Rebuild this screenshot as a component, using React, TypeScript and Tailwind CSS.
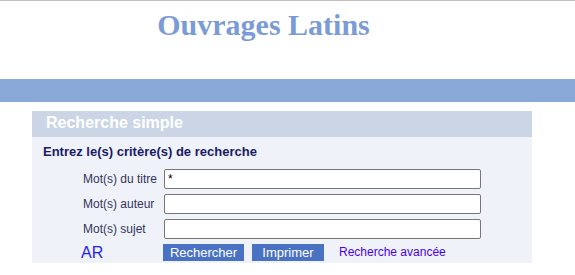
const FIELDS = [
  { label: 'Mot(s) du titre', value: '*' },
  { label: 'Mot(s) auteur', value: '' },
  { label: 'Mot(s) sujet', value: '' },
]

const App = () => {
  return (
    <div className="w-[575px] min-h-[275px] bg-white font-['Liberation_Sans',Arial,sans-serif]">
      {/* Title */}
      <header className="h-[79px] border-t border-[#c9bdbd] pt-[9px] pr-[48px]">
        <h1 className="text-center font-['Liberation_Serif',serif] text-[30px] font-bold leading-[30px] text-[#7b9bd6]">
          Ouvrages Latins
        </h1>
      </header>

      <div className="h-[23px] bg-[#8aa8d8]" />

      {/* Search panel */}
      <section className="ml-[32px] mt-[9px] w-[500px]">
        <div className="h-[26px] bg-[#cbd5e6] pl-[14px] text-[16px] font-bold leading-[24px] text-white">
          Recherche simple
        </div>
        <div className="h-[126px] bg-[#eff3f9] pt-[7px]">
          <p className="pl-[11px] text-[13px] font-bold leading-[16px] text-[#1a1a66]">
            Entrez le(s) critère(s) de recherche
          </p>
          <div className="mt-[9px] flex flex-col gap-[5px]">
            {FIELDS.map(({ label, value }) => (
              <div key={label} className="flex items-center">
                <label className="w-[132px] pl-[51px] text-[12px] text-[#33335a]">{label}</label>
                <input
                  type="text"
                  defaultValue={value}
                  className="h-[20px] w-[317px] rounded-[2px] border border-[#767676] bg-white px-[3px] text-[12px] text-black outline-none"
                />
              </div>
            ))}
          </div>
          <div className="mt-[5px] flex items-center">
            <span className="w-[131px] pl-[49px] text-[16px] leading-[17px] text-[#2121ff]">AR</span>
            <button className="h-[17px] w-[81px] bg-[#4a72c2] text-[13px] leading-[17px] text-white">
              Rechercher
            </button>
            <button className="ml-[8px] h-[17px] w-[72px] bg-[#4a72c2] text-[13px] leading-[17px] text-white">
              Imprimer
            </button>
            <a href="#" className="ml-[15px] text-[12px] leading-[17px] text-[#4a00ee]">
              Recherche avancée
            </a>
          </div>
        </div>
      </section>
    </div>
  )
}

export default App
